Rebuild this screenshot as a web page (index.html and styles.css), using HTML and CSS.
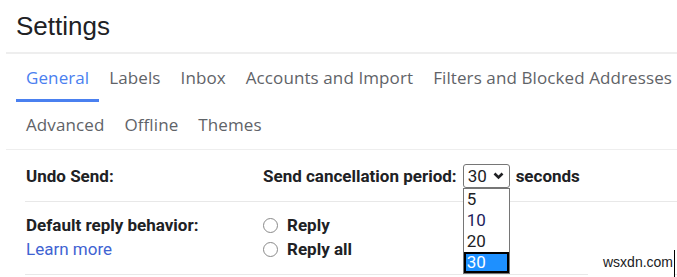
FILE: index.html
```html
<!DOCTYPE html>
<html lang="en">

<head>
    <meta charset="UTF-8">
    <meta name="viewport" content="width=device-width, initial-scale=1.0">
    <title>Settings</title>
    <link rel="stylesheet" href="styles.css">
</head>

<body>
    <div class="page">
        <h1 class="title">Settings</h1>
        <div class="tabs">
            <div class="tab-row">
                <a class="tab active">General</a>
                <a class="tab">Labels</a>
                <a class="tab">Inbox</a>
                <a class="tab">Accounts and Import</a>
                <a class="tab">Filters and Blocked Addresses</a>
            </div>
            <div class="tab-row">
                <a class="tab">Advanced</a>
                <a class="tab">Offline</a>
                <a class="tab">Themes</a>
            </div>
        </div>
        <div class="settings">
            <div class="row">
                <div class="label">Undo Send:</div>
                <div class="value">
                    <span>Send cancellation period:</span>
                    <div class="select">
                        <div class="select-box">
                            <span>30</span>
                            <svg class="chev" width="11" height="8" viewBox="0 0 11 8">
                                <path d="M1.5 1.5 L5.5 5.5 L9.5 1.5" fill="none" stroke="#202124" stroke-width="2.6"/>
                            </svg>
                        </div>
                        <ul class="options">
                            <li>5</li>
                            <li class="ten">10</li>
                            <li>20</li>
                            <li class="picked">30</li>
                        </ul>
                    </div>
                    <span>seconds</span>
                </div>
            </div>
            <div class="row">
                <div class="label">
                    <div>Default reply behavior:</div>
                    <a class="link">Learn more</a>
                </div>
                <div class="value radios">
                    <label class="radio"><i class="dot"></i>Reply</label>
                    <label class="radio"><i class="dot"></i>Reply all</label>
                </div>
            </div>
        </div>
        <div class="mark">wsxdn.com</div>
    </div>
</body>

</html>
```

FILE: styles.css
```css
* {
    padding: 0;
    margin: 0;
    box-sizing: border-box;
}

body {
    background-color: #fff;
    font-family: Roboto, "Liberation Sans", sans-serif;
    color: #202124;
}

.page {
    width: 677px;
    height: 277px;
    overflow: hidden;
    position: relative;
}

.title {
    font-family: "Liberation Sans", Arial, sans-serif;
    font-weight: normal;
    font-size: 26px;
    line-height: 52px;
    height: 52px;
    padding-left: 16px;
    color: #202124;
}

.tabs {
    margin-left: 6px;
    border-top: 2px solid #eeeeee;
    border-bottom: 1px solid #eeeeee;
    padding-left: 10px;
    white-space: nowrap;
}

.tab-row {
    display: flex;
    height: 48px;
}

.tab-row + .tab-row {
    height: 47px;
}

.tab {
    display: flex;
    align-items: center;
    padding: 0 10px;
    font-family: "Open Sans", sans-serif;
    font-size: 17px;
    font-weight: 500;
    letter-spacing: 0.1px;
    color: #5f6368;
    border-bottom: 3px solid transparent;
    padding-top: 1px;
}

.tab.active {
    color: #4a80f0;
    border-bottom-color: #4a80f0;
}

.settings {
    padding-left: 25px;
}

.row {
    display: flex;
    border-bottom: 1px solid #e8e8e8;
    font-size: 17px;
    font-weight: bold;
}

.row:first-child {
    height: 52px;
    align-items: center;
    padding-top: 1px;
}

.row:nth-child(2) {
    height: 73px;
    padding-top: 11px;
    line-height: 24px;
}

.label {
    width: 238px;
    padding-left: 1px;
}

.value {
    display: flex;
    align-items: center;
}

.link {
    font-weight: normal;
    font-size: 17px;
    color: #3f63d2;
}

.select {
    position: relative;
    margin: 0 6px;
}

.select-box {
    width: 47px;
    height: 24px;
    border: 1px solid #767676;
    border-radius: 3px;
    display: flex;
    align-items: center;
    justify-content: space-between;
    padding: 0 5px 0 4px;
    font-weight: normal;
    font-size: 17px;
}

.options {
    list-style: none;
    position: absolute;
    top: 24px;
    left: 0;
    width: 47px;
    border: 1px solid #767676;
    background-color: #fff;
    font-weight: normal;
    font-size: 17px;
    line-height: 21px;
}

.options li {
    padding-left: 3px;
}

.options .ten {
    color: #1c1c5c;
}

.options .picked {
    background-color: #1e90ff;
    color: #fff;
    border: 2px solid #000;
    padding-left: 1px;
    line-height: 17px;
}

.radios {
    flex-direction: column;
    align-items: flex-start;
}

.radio {
    display: flex;
    align-items: center;
}

.dot {
    width: 15px;
    height: 15px;
    border: 1.5px solid #8a8a8a;
    border-radius: 50%;
    margin-right: 9px;
}

.mark {
    position: absolute;
    right: 0;
    bottom: 0;
    width: 87px;
    height: 27px;
    background-color: #fff;
    font-family: "Liberation Sans", Arial, sans-serif;
    font-size: 14px;
    line-height: 24px;
    padding-left: 15px;
    border-right: 1px solid #000;
    margin-right: 2px;
    font-weight: normal;
}
```
